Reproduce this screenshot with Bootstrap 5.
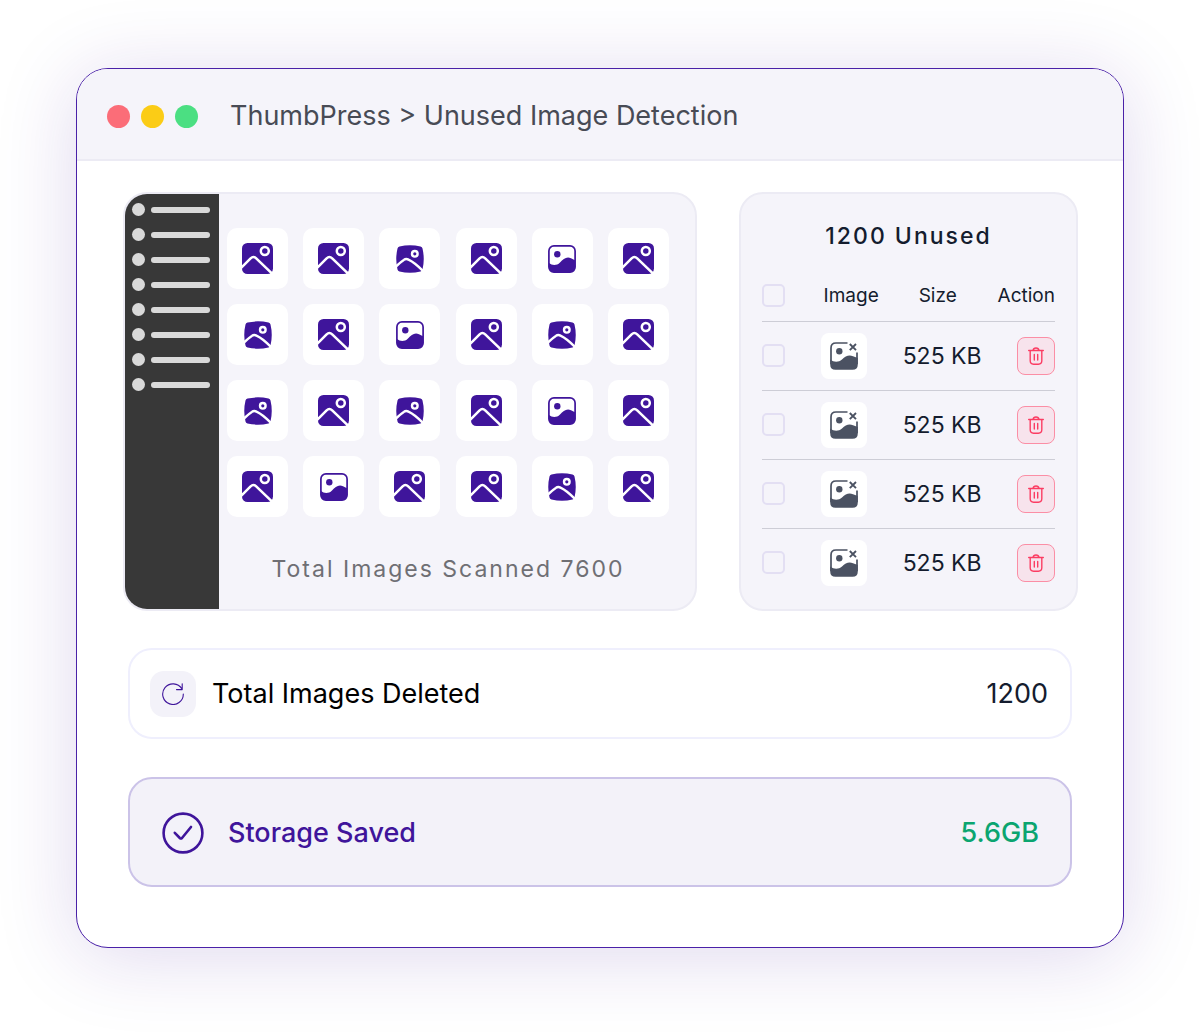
<!DOCTYPE html>
<html lang="en">
<head>
<meta charset="utf-8">
<meta name="viewport" content="width=device-width, initial-scale=1">
<title>ThumbPress – Unused Image Detection</title>
<link href="https://cdn.jsdelivr.net/npm/bootstrap@5.3.0/dist/css/bootstrap.min.css" rel="stylesheet">
<style>
  :root { --tp-purple: #3f159b; --tp-ink: #141c2e; --tp-soft: #f5f4fa; --tp-line: #ecebf4; }
  body { font-family: Inter, sans-serif; color: var(--tp-ink); background: #fff; padding: 68px 76px 84px; font-size: 27px; line-height: 30px; }
  .app-window { border: 1px solid #4a21a8; border-radius: 32px; background: #fff; box-shadow: 0 8px 80px rgba(63, 21, 155, .17); overflow: hidden; }
  .titlebar { background: var(--tp-soft); border-bottom: 2px solid var(--tp-line); padding: 32px 30px 28px; gap: 32px; }
  .titlebar h1 { font-size: 27px; line-height: 30px; font-weight: 400; color: #484b55; }
  .dots { gap: 11px; }
  .dots span { width: 23px; height: 23px; border-radius: 50%; }
  .dot-red { background: #fb6d78; } .dot-yellow { background: #fbcc16; } .dot-green { background: #4bdf82; }
  .app-body { padding: 31px 45px 60px 46px; }
  .panels { display: grid; grid-template-columns: minmax(0, 574fr) minmax(0, 339fr); gap: 42px; }
  .panel { background: var(--tp-soft); border: 2px solid var(--tp-line); border-radius: 24px; overflow: hidden; }
  .panel-unused { padding: 27px 21px 9px; }
  .side-menu { width: 94px; background: #383838; padding: 9px 9px 9px 7px; gap: 12px; flex-shrink: 0; }
  .side-menu li { gap: 6px; height: 13px; }
  .side-menu i { width: 13px; height: 13px; border-radius: 50%; background: #d9d9d9; }
  .side-menu b { height: 6px; border-radius: 3px; background: #d9d9d9; }
  .scan-area { padding: 34px 26px 25px 8px; }
  .thumbs { display: grid; grid-template-columns: repeat(6, 61px); justify-content: space-between; row-gap: 15px; }
  .thumb { height: 61px; border-radius: 10px; background: #fff; color: var(--tp-purple); }
  .spaced { font-size: 23px; line-height: 30px; letter-spacing: 2px; }
  .scan-total { margin-top: 37px; color: #6f6f74; }
  .unused-title { font-weight: 500; }
  .unused-table { margin-top: 17px; }
  .unused-table th { font-size: 19px; font-weight: 400; height: 53px; padding: 3px 0 0; }
  .unused-table td { font-size: 23px; height: 69px; padding: 0; white-space: nowrap; }
  .unused-table tr { border-bottom: 1px solid #cdcdd6; }
  .unused-table tbody tr:last-child { border-bottom: 0; }
  .unused-table .th-image { padding-left: 3px; } .unused-table .th-size { padding-left: 16px; }
  .unused-table .form-check-input { display: block; width: 23px; height: 23px; margin: 0; border: 2px solid #e3dff3; border-radius: 5px; background-color: transparent; }
  .unused-table .form-check-input:checked { background-color: var(--tp-purple); }
  .unused-table .col-check { width: 20%; } .unused-table .col-image { width: 28%; } .unused-table .col-size { width: 32%; }
  .file-tile { width: 46px; height: 46px; border-radius: 8px; background: #fff; color: #4b5262; }
  .btn-trash { width: 38px; height: 38px; padding: 0; border: 1px solid #fb8ea5; border-radius: 8px; background: #f7e3ec; color: #fb3d63; }
  .stats { padding: 0 6px 0 5px; gap: 38px; margin-top: 37px; }
  .stat { border-radius: 24px; border: 2px solid #efeffd; }
  .stat-deleted { padding: 21px 22px 20px 20px; gap: 16px; }
  .stat-saved { padding: 33px 31px 31px 32px; gap: 24px; background: #f3f2f9; border-color: #cbc3e8; color: var(--tp-purple); font-weight: 500; }
  .stat-icon { width: 46px; height: 46px; border-radius: 14px; background: #f3f2f9; color: var(--tp-purple); }
  .saved-value { color: #0ba570; }
  svg { display: block; flex-shrink: 0; }
  @media (max-width: 1100px) {
    body { padding: 24px; }
    .app-body { padding: 24px; }
    .panels { grid-template-columns: minmax(0, 1fr); }
    .thumbs { grid-template-columns: repeat(auto-fill, 61px); column-gap: 15px; }
  }
</style>
</head>
<body>
<svg width="0" height="0" class="position-absolute" aria-hidden="true">
  <symbol id="pic-square" viewBox="0 0 31 31">
    <rect width="31" height="31" rx="5.5" fill="currentColor"/>
    <circle cx="22.8" cy="8" r="4" fill="none" stroke="#fff" stroke-width="2.5"/>
    <path d="M-1 25 8.6 15.4Q11.4 12.6 14.2 15.4L30.5 31" fill="none" stroke="#fff" stroke-width="2.5"/>
  </symbol>
  <symbol id="pic-round" viewBox="0 0 28 28">
    <path d="M3.5 1.6Q14-.9 24.5 1.6 26.2 2 26.5 3.6 29 14 26.5 24.4 26.2 26 24.5 26.4 14 28.9 3.5 26.4 1.8 26 1.5 24.4-1 14 1.5 3.6 1.8 2 3.5 1.6Z" fill="currentColor"/>
    <circle cx="18.8" cy="8.8" r="2.8" fill="none" stroke="#fff" stroke-width="2.4"/>
    <path d="M-1 22.5C2 19.5 4.5 17 7.8 14.9Q10 13.3 12.5 14.6C18 17.2 22.500 21.300 27.500 26.500" fill="none" stroke="#fff" stroke-width="2.4"/>
  </symbol>
  <symbol id="pic-outline" viewBox="0 0 28 28">
    <rect x=".9" y=".9" width="26.2" height="26.2" rx="5" fill="none" stroke="currentColor" stroke-width="1.7"/>
    <circle cx="9.3" cy="9.3" r="3.2" fill="currentColor"/>
    <path d="M1 18C4 20.500 8.500 21 12 17.500 15.500 14 18.500 11.200 23 13.300L27 15.300V22.500Q27 27 22.500 27H5.500Q1 27 1 22.500Z" fill="currentColor"/>
  </symbol>
  <symbol id="pic-missing" viewBox="0 0 28 28">
    <path d="M17.500 1H6Q1 1 1 6V22M27 10.500V22" fill="none" stroke="currentColor" stroke-width="1.7"/>
    <circle cx="9.3" cy="9.3" r="3.2" fill="currentColor"/>
    <path d="M.2 17.500C4 20.500 8.500 20.500 12 17.500 15.500 14.500 18.500 12.500 23 14.300L27.800 16V22.500Q27.800 27.800 22.500 27.800H5.500Q.2 27.800 .2 22.500Z" fill="currentColor"/>
    <path d="M19.800 2 26 8.200M26 2 19.800 8.200" fill="none" stroke="currentColor" stroke-width="1.9"/>
  </symbol>
  <symbol id="ico-trash" viewBox="0 0 16 18">
    <path d="M.7 3.500H15.300M5 3.300C5.500.2 10.500.2 11 3.300M2.200 3.500V13.800Q2.200 17.200 5.600 17.200H10.400Q13.800 17.200 13.800 13.800V3.500M6.300 7.500V13M9.700 7.500V13" fill="none" stroke="currentColor" stroke-width="1.4" stroke-linecap="round"/>
  </symbol>
</svg>

<main class="app-window">
  <header class="titlebar d-flex align-items-center">
    <div class="dots d-flex" aria-hidden="true"><span class="dot-red"></span><span class="dot-yellow"></span><span class="dot-green"></span></div>
    <h1 class="mb-0">ThumbPress &gt; Unused Image Detection</h1>
  </header>
  <div class="app-body">
    <div class="panels">
      <section class="panel panel-scan d-flex">
        <ul class="side-menu list-unstyled mb-0 d-flex flex-column" aria-hidden="true">
          <li class="d-flex align-items-center"><i></i><b class="flex-grow-1"></b></li>
          <li class="d-flex align-items-center"><i></i><b class="flex-grow-1"></b></li>
          <li class="d-flex align-items-center"><i></i><b class="flex-grow-1"></b></li>
          <li class="d-flex align-items-center"><i></i><b class="flex-grow-1"></b></li>
          <li class="d-flex align-items-center"><i></i><b class="flex-grow-1"></b></li>
          <li class="d-flex align-items-center"><i></i><b class="flex-grow-1"></b></li>
          <li class="d-flex align-items-center"><i></i><b class="flex-grow-1"></b></li>
          <li class="d-flex align-items-center"><i></i><b class="flex-grow-1"></b></li>
        </ul>
        <div class="scan-area flex-grow-1">
          <div class="thumbs">
            <div class="thumb d-flex align-items-center justify-content-center"><svg width="31" height="31"><use href="#pic-square"/></svg></div>
            <div class="thumb d-flex align-items-center justify-content-center"><svg width="31" height="31"><use href="#pic-square"/></svg></div>
            <div class="thumb d-flex align-items-center justify-content-center"><svg width="28" height="28"><use href="#pic-round"/></svg></div>
            <div class="thumb d-flex align-items-center justify-content-center"><svg width="31" height="31"><use href="#pic-square"/></svg></div>
            <div class="thumb d-flex align-items-center justify-content-center"><svg width="28" height="28"><use href="#pic-outline"/></svg></div>
            <div class="thumb d-flex align-items-center justify-content-center"><svg width="31" height="31"><use href="#pic-square"/></svg></div>

            <div class="thumb d-flex align-items-center justify-content-center"><svg width="28" height="28"><use href="#pic-round"/></svg></div>
            <div class="thumb d-flex align-items-center justify-content-center"><svg width="31" height="31"><use href="#pic-square"/></svg></div>
            <div class="thumb d-flex align-items-center justify-content-center"><svg width="28" height="28"><use href="#pic-outline"/></svg></div>
            <div class="thumb d-flex align-items-center justify-content-center"><svg width="31" height="31"><use href="#pic-square"/></svg></div>
            <div class="thumb d-flex align-items-center justify-content-center"><svg width="28" height="28"><use href="#pic-round"/></svg></div>
            <div class="thumb d-flex align-items-center justify-content-center"><svg width="31" height="31"><use href="#pic-square"/></svg></div>

            <div class="thumb d-flex align-items-center justify-content-center"><svg width="28" height="28"><use href="#pic-round"/></svg></div>
            <div class="thumb d-flex align-items-center justify-content-center"><svg width="31" height="31"><use href="#pic-square"/></svg></div>
            <div class="thumb d-flex align-items-center justify-content-center"><svg width="28" height="28"><use href="#pic-round"/></svg></div>
            <div class="thumb d-flex align-items-center justify-content-center"><svg width="31" height="31"><use href="#pic-square"/></svg></div>
            <div class="thumb d-flex align-items-center justify-content-center"><svg width="28" height="28"><use href="#pic-outline"/></svg></div>
            <div class="thumb d-flex align-items-center justify-content-center"><svg width="31" height="31"><use href="#pic-square"/></svg></div>

            <div class="thumb d-flex align-items-center justify-content-center"><svg width="31" height="31"><use href="#pic-square"/></svg></div>
            <div class="thumb d-flex align-items-center justify-content-center"><svg width="28" height="28"><use href="#pic-outline"/></svg></div>
            <div class="thumb d-flex align-items-center justify-content-center"><svg width="31" height="31"><use href="#pic-square"/></svg></div>
            <div class="thumb d-flex align-items-center justify-content-center"><svg width="31" height="31"><use href="#pic-square"/></svg></div>
            <div class="thumb d-flex align-items-center justify-content-center"><svg width="28" height="28"><use href="#pic-round"/></svg></div>
            <div class="thumb d-flex align-items-center justify-content-center"><svg width="31" height="31"><use href="#pic-square"/></svg></div>
          </div>
          <p class="scan-total spaced text-center mb-0">Total Images Scanned 7600</p>
        </div>
      </section>

      <section class="panel panel-unused">
        <h2 class="unused-title spaced text-center mb-0">1200 Unused</h2>
        <table class="unused-table w-100 align-middle">
          <colgroup><col class="col-check"><col class="col-image"><col class="col-size"><col></colgroup>
          <thead>
            <tr>
              <th scope="col"><input class="form-check-input" type="checkbox" aria-label="Select all images"></th>
              <th scope="col" class="th-image">Image</th>
              <th scope="col" class="th-size">Size</th>
              <th scope="col" class="text-end">Action</th>
            </tr>
          </thead>
          <tbody>
            <tr>
              <td><input class="form-check-input" type="checkbox" aria-label="Select image 1"></td>
              <td><div class="file-tile d-flex align-items-center justify-content-center"><svg width="28" height="28"><use href="#pic-missing"/></svg></div></td>
              <td>525 KB</td>
              <td><button type="button" class="btn btn-trash d-flex align-items-center justify-content-center ms-auto" aria-label="Delete image 1"><svg width="16" height="18"><use href="#ico-trash"/></svg></button></td>
            </tr>
            <tr>
              <td><input class="form-check-input" type="checkbox" aria-label="Select image 2"></td>
              <td><div class="file-tile d-flex align-items-center justify-content-center"><svg width="28" height="28"><use href="#pic-missing"/></svg></div></td>
              <td>525 KB</td>
              <td><button type="button" class="btn btn-trash d-flex align-items-center justify-content-center ms-auto" aria-label="Delete image 2"><svg width="16" height="18"><use href="#ico-trash"/></svg></button></td>
            </tr>
            <tr>
              <td><input class="form-check-input" type="checkbox" aria-label="Select image 3"></td>
              <td><div class="file-tile d-flex align-items-center justify-content-center"><svg width="28" height="28"><use href="#pic-missing"/></svg></div></td>
              <td>525 KB</td>
              <td><button type="button" class="btn btn-trash d-flex align-items-center justify-content-center ms-auto" aria-label="Delete image 3"><svg width="16" height="18"><use href="#ico-trash"/></svg></button></td>
            </tr>
            <tr>
              <td><input class="form-check-input" type="checkbox" aria-label="Select image 4"></td>
              <td><div class="file-tile d-flex align-items-center justify-content-center"><svg width="28" height="28"><use href="#pic-missing"/></svg></div></td>
              <td>525 KB</td>
              <td><button type="button" class="btn btn-trash d-flex align-items-center justify-content-center ms-auto" aria-label="Delete image 4"><svg width="16" height="18"><use href="#ico-trash"/></svg></button></td>
            </tr>
          </tbody>
        </table>
      </section>
    </div>

    <div class="stats d-flex flex-column">
      <div class="stat stat-deleted d-flex align-items-center">
        <span class="stat-icon d-flex align-items-center justify-content-center">
          <svg width="22" height="22" viewBox="0 0 22 22" fill="none" stroke="currentColor" stroke-width="1.1" stroke-linecap="round" stroke-linejoin="round"><path d="M21.300 11A10.300 10.300 0 1 1 19.800 5.800M20.200.8V6.600H14.500"/></svg>
        </span>
        <span class="text-black">Total Images Deleted</span>
        <span class="ms-auto">1200</span>
      </div>
      <div class="stat stat-saved d-flex align-items-center">
        <svg width="42" height="42" viewBox="0 0 42 42" fill="none" stroke="currentColor" stroke-width="2.6" stroke-linecap="round" stroke-linejoin="round"><circle cx="21" cy="21" r="19.4"/><path d="M12.800 20.800 17.800 26Q18.900 27 20 26L29 15"/></svg>
        <span>Storage Saved</span>
        <span class="saved-value ms-auto">5.6GB</span>
      </div>
    </div>
  </div>
</main>
<script src="https://cdn.jsdelivr.net/npm/bootstrap@5.3.0/dist/js/bootstrap.bundle.min.js"></script>
</body>
</html>
